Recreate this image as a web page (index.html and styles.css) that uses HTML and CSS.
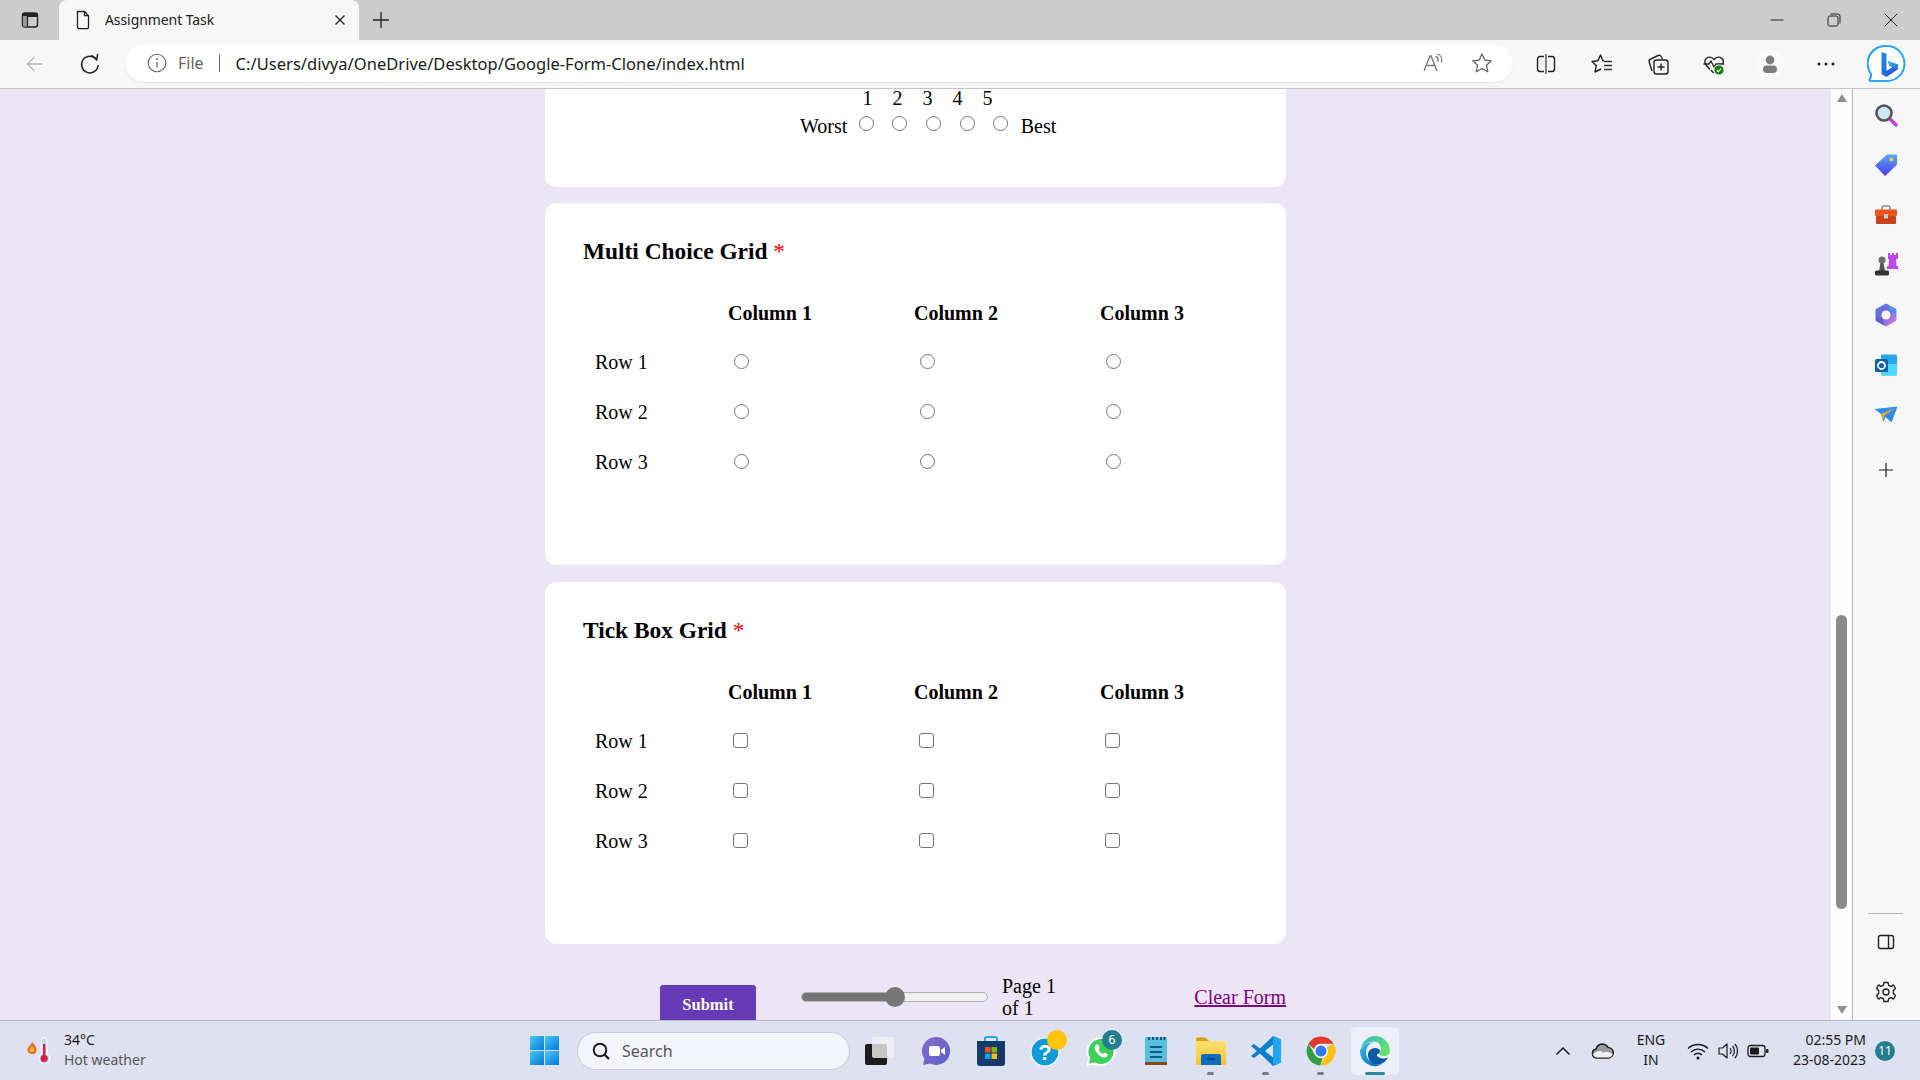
FILE: index.html
```html
<!DOCTYPE html>
<html lang="en">
<head>
<meta charset="utf-8">
<title>Assignment Task</title>
<link rel="stylesheet" href="styles.css">
</head>
<body>
<svg class="defs" width="0" height="0">
  <defs>
    <linearGradient id="gBing" x1="0" y1="0" x2="1" y2="1"><stop offset="0" stop-color="#1b8be8"/><stop offset="1" stop-color="#2f4fd8"/></linearGradient>
    <linearGradient id="gBing2" x1="0" y1="0" x2="1" y2="1"><stop offset="0" stop-color="#39c7ef"/><stop offset="1" stop-color="#1f6fe0"/></linearGradient>
    <linearGradient id="gTag" x1="0" y1="0" x2="0" y2="1"><stop offset="0" stop-color="#58a6f5"/><stop offset="1" stop-color="#4a3df0"/></linearGradient>
    <linearGradient id="gM365" x1="0" y1="0" x2="1" y2="1"><stop offset="0" stop-color="#3f7fe0"/><stop offset="0.5" stop-color="#8a62d8"/><stop offset="1" stop-color="#c590e6"/></linearGradient>
    <linearGradient id="gWin" x1="0" y1="0" x2="1" y2="1"><stop offset="0" stop-color="#4fc8fb"/><stop offset="1" stop-color="#0078d4"/></linearGradient>
    <linearGradient id="gEdge" x1="0" y1="0" x2="1" y2="1"><stop offset="0" stop-color="#35c1f1"/><stop offset="1" stop-color="#0c59a4"/></linearGradient>
    <linearGradient id="gEdge2" x1="0" y1="0" x2="1" y2="0.5"><stop offset="0" stop-color="#2cb8d8"/><stop offset="1" stop-color="#66e36a"/></linearGradient>
    <linearGradient id="gMsg" x1="0" y1="0" x2="1" y2="1"><stop offset="0" stop-color="#8b6cc9"/><stop offset="1" stop-color="#5560cf"/></linearGradient>
    <linearGradient id="gFolder" x1="0" y1="0" x2="0" y2="1"><stop offset="0" stop-color="#ffdf70"/><stop offset="1" stop-color="#fbc02d"/></linearGradient>
  </defs>
</svg>

<div class="app">
  <header class="tabstrip">
    <div class="tab-toggle">
      <svg class="ic20" viewBox="0 0 20 20"><rect x="2.5" y="3" width="15" height="14" rx="2.5" fill="none" stroke="#222" stroke-width="1.4"/><rect x="2.5" y="3" width="15" height="4" rx="1.5" fill="#222"/><rect x="3" y="6" width="4.5" height="10.5" fill="#999"/><path d="M7.5 6v11" stroke="#222" stroke-width="1.2"/></svg>
    </div>
    <div class="tab">
      <svg class="ic20" viewBox="0 0 20 20"><path d="M4.5 1.500h7l4 4.200v11.300a1.700 1.700 0 0 1-1.700 1.700H6.200a1.700 1.700 0 0 1-1.700-1.700z" fill="none" stroke="#222" stroke-width="1.300"/><path d="M11.500 1.500v4.200h4" fill="none" stroke="#222" stroke-width="1.300"/></svg>
      <span class="tab-title">Assignment Task</span>
      <svg class="ic12 tab-close" viewBox="0 0 12 12"><path d="M1.5 1.5l9 9M10.5 1.5l-9 9" stroke="#222" stroke-width="1.4"/></svg>
    </div>
    <svg class="ic20 tab-plus" viewBox="0 0 20 20"><path d="M10 2v16M2 10h16" stroke="#222" stroke-width="1.3"/></svg>
    <div class="window-controls">
      <div class="win-btn"><svg class="ic14" viewBox="0 0 14 14"><path d="M0.5 7h13" stroke="#222" stroke-width="1"/></svg></div>
      <div class="win-btn"><svg class="ic14" viewBox="0 0 14 14"><rect x="1" y="3" width="10" height="10" rx="1.8" fill="none" stroke="#222" stroke-width="1"/><path d="M3.5 1h7.3A2.2 2.2 0 0 1 13 3.2v7.3" fill="none" stroke="#222" stroke-width="1"/></svg></div>
      <div class="win-btn"><svg class="ic14" viewBox="0 0 14 14"><path d="M0.8 0.8l12.4 12.4M13.2 0.8L0.8 13.2" stroke="#222" stroke-width="1"/></svg></div>
    </div>
  </header>

  <nav class="toolbar">
    <div class="tool"><svg class="ic20" viewBox="0 0 20 20"><path d="M18 10H2.5M9.5 3l-7 7 7 7" fill="none" stroke="#b9b9b9" stroke-width="1.4"/></svg></div>
    <div class="tool"><svg class="ic24" viewBox="0 0 24 24"><path d="M18.5 7.5A8.3 8.3 0 1 0 20.2 13" fill="none" stroke="#222" stroke-width="1.5"/><path d="M13.7 3.2l5 4.6 1-6" fill="none" stroke="#222" stroke-width="1.5"/></svg></div>
    <div class="address">
      <svg class="ic20" viewBox="0 0 20 20"><circle cx="10" cy="10" r="8.800" fill="none" stroke="#666" stroke-width="1.100"/><path d="M10 8.800v6" stroke="#666" stroke-width="1.200"/><circle cx="10" cy="6" r="1" fill="#666"/></svg>
      <span class="addr-file">File</span>
      <span class="addr-sep"></span>
      <span class="addr-url">C:/Users/divya/OneDrive/Desktop/Google-Form-Clone/index.html</span>
      <svg class="ic24 addr-read" viewBox="0 0 24 24"><path d="M3 20l6-15h1l6 15M5.500 14.500h8.500" fill="none" stroke="#777" stroke-width="1.300"/><path d="M14.500 5.500c2 .5 3 2.200 2.500 5M16.500 3c3.500 1 5 4.500 4 8.500" fill="none" stroke="#777" stroke-width="1.300"/></svg>
      <svg class="ic24 addr-star" viewBox="0 0 24 24"><path d="M12 3l2.800 6 6.500.8-4.800 4.500 1.300 6.500-5.800-3.200-5.800 3.200 1.300-6.500-4.800-4.500 6.500-.8z" fill="none" stroke="#666" stroke-width="1.3" stroke-linejoin="round"/></svg>
    </div>
    <div class="tools-right">
      <div class="tool-r"><svg class="ic24" viewBox="0 0 24 24"><path d="M10 4.500H6A2.500 2.500 0 0 0 3.500 7v10A2.500 2.500 0 0 0 6 19.500h4M14 4.500h4A2.500 2.500 0 0 1 20.500 7v10a2.500 2.500 0 0 1-2.500 2.500h-4" fill="none" stroke="#222" stroke-width="1.4"/><path d="M12 2v20" stroke="#666" stroke-width="1.6"/></svg></div>
      <div class="tool-r"><svg class="ic24" viewBox="0 0 24 24"><path d="M14 8.800L12.800 8.500 10.500 3 8 8.800l-6 .7 4.300 4.200L5 20l6-3" fill="none" stroke="#222" stroke-width="1.400" stroke-linejoin="round"/><path d="M14 9.500h8M14 13.500h8M14 17.500h8" stroke="#333" stroke-width="1.300"/></svg></div>
      <div class="tool-r"><svg class="ic24" viewBox="0 0 24 24"><rect x="8" y="8" width="14" height="14" rx="2.500" fill="none" stroke="#222" stroke-width="1.4"/><path d="M15 11.500v7M11.500 15h7" stroke="#222" stroke-width="1.4"/><path d="M6 19l-2.800-9A2.500 2.500 0 0 1 5 7l7-3.500a2.500 2.500 0 0 1 3.300 1.200L16.500 7" fill="none" stroke="#222" stroke-width="1.4"/></svg></div>
      <div class="tool-r"><svg class="ic24" viewBox="0 0 24 24"><path d="M8 17.500L4 13c-4-5 3-11 8-5.500C17 2 24 8 20.500 12" fill="none" stroke="#222" stroke-width="1.4"/><path d="M1.500 12H7l2-3 3 6 2-3h8" fill="none" stroke="#222" stroke-width="1.300"/><path d="M9 18l2.500 3" stroke="#222" stroke-width="1.300"/><circle cx="17" cy="18" r="5" fill="#107c10" stroke="#f7f7f7" stroke-width="0.800"/><path d="M14.800 18l1.600 1.600 2.800-3" fill="none" stroke="#fff" stroke-width="1.200"/></svg></div>
      <div class="tool-r"><div class="profile"><svg class="ic20" viewBox="0 0 20 20"><circle cx="10" cy="6" r="4.400" fill="#7d7d7d"/><rect x="3" y="11.500" width="14" height="7.500" rx="3.700" fill="#7d7d7d"/></svg></div></div>
      <div class="tool-r"><svg class="ic20" viewBox="0 0 20 20"><circle cx="3" cy="10" r="1.500" fill="#222"/><circle cx="10" cy="10" r="1.500" fill="#222"/><circle cx="17" cy="10" r="1.500" fill="#222"/></svg></div>
      <div class="tool-bing"><svg class="ic40" viewBox="0 0 40 40"><path d="M20 2a17.500 17.500 0 0 1 0 35H4c-1.200 0-1.800-.8-1.200-1.800 1.300-2 1.500-3.500 1-5.700A17.500 17.500 0 0 1 20 2z" fill="#fff" stroke="#2aa4ee" stroke-width="2"/><path d="M14.500 8l5 1.700v17l6-3.500-3-1.400-1.800-4.700 10 3.500v5L19.500 33l-5-2.800z" fill="url(#gBing)"/><path d="M20.700 17.100l10 3.500v5l-7-3.400z" fill="url(#gBing2)"/></svg></div>
    </div>
  </nav>

  <div class="workspace">
    <main class="page">
      <div class="form">
        <section class="card card-rating">
          <div class="scale-nums"><span>1</span><span>2</span><span>3</span><span>4</span><span>5</span></div>
          <div class="scale-row">
            <span class="scale-worst">Worst</span>
            <input class="radio scale-radio" type="radio" name="r0">
            <input class="radio scale-radio" type="radio" name="r0">
            <input class="radio scale-radio" type="radio" name="r0">
            <input class="radio scale-radio" type="radio" name="r0">
            <input class="radio scale-radio" type="radio" name="r0">
            <span class="scale-best">Best</span>
          </div>
        </section>

        <section class="card card-grid">
          <h3 class="q-title">Multi Choice Grid <span class="req">*</span></h3>
          <div class="grid">
            <span></span><b>Column 1</b><b>Column 2</b><b>Column 3</b>
            <span class="row-label">Row 1</span><span><input class="radio" type="radio" name="a1"></span><span><input class="radio" type="radio" name="a1"></span><span><input class="radio" type="radio" name="a1"></span>
            <span class="row-label">Row 2</span><span><input class="radio" type="radio" name="a2"></span><span><input class="radio" type="radio" name="a2"></span><span><input class="radio" type="radio" name="a2"></span>
            <span class="row-label">Row 3</span><span><input class="radio" type="radio" name="a3"></span><span><input class="radio" type="radio" name="a3"></span><span><input class="radio" type="radio" name="a3"></span>
          </div>
        </section>

        <section class="card card-grid">
          <h3 class="q-title">Tick Box Grid <span class="req">*</span></h3>
          <div class="grid">
            <span></span><b>Column 1</b><b>Column 2</b><b>Column 3</b>
            <span class="row-label">Row 1</span><span><input class="check" type="checkbox"></span><span><input class="check" type="checkbox"></span><span><input class="check" type="checkbox"></span>
            <span class="row-label">Row 2</span><span><input class="check" type="checkbox"></span><span><input class="check" type="checkbox"></span><span><input class="check" type="checkbox"></span>
            <span class="row-label">Row 3</span><span><input class="check" type="checkbox"></span><span><input class="check" type="checkbox"></span><span><input class="check" type="checkbox"></span>
          </div>
        </section>

        <div class="form-foot">
          <button class="submit" type="button">Submit</button>
          <input class="progress" type="range" min="0" max="100" value="50">
          <span class="page-count">Page 1 of 1</span>
          <a class="clear" href="#">Clear Form</a>
        </div>
      </div>
    </main>

    <div class="scrollbar">
      <span class="arrow-up"></span>
      <span class="thumb"></span>
      <span class="arrow-down"></span>
    </div>

    <aside class="sidebar">
      <div class="side-btn"><svg class="ic24" viewBox="0 0 24 24"><path d="M15 15l7 7" stroke="#c53fdc" stroke-width="3.500" stroke-linecap="round"/><circle cx="10" cy="10" r="7.500" fill="#cfe6f5" stroke="#555" stroke-width="2.600"/></svg></div>
      <div class="side-btn"><svg class="ic24" viewBox="0 0 24 24"><path d="M1.500 12.500L13 2h9.500v9.500L11 22.500z" fill="url(#gTag)" stroke="url(#gTag)" stroke-width="1" stroke-linejoin="round"/><circle cx="17.500" cy="6.500" r="2" fill="#f4cf3a"/></svg></div>
      <div class="side-btn"><svg class="ic24" viewBox="0 0 24 24"><path d="M8 7V4.500A1.500 1.500 0 0 1 9.500 3h5A1.500 1.500 0 0 1 16 4.500V7" fill="none" stroke="#8a8a8a" stroke-width="1.600"/><rect x="1" y="6.500" width="22" height="6.500" rx="1" fill="#e9541d"/><rect x="2" y="13" width="20" height="8" rx="1" fill="#c9431a"/><rect x="10" y="11" width="4" height="4.500" fill="#ccc"/></svg></div>
      <div class="side-btn"><svg class="ic24" viewBox="0 0 24 24"><circle cx="8" cy="7" r="3.500" fill="#6d6d6d"/><path d="M6.500 10h3l1.500 8H5z" fill="#555"/><rect x="1" y="17.500" width="14" height="5" rx="1.500" fill="#333"/><path d="M14 0h2v2h2V0h2v2h2V0h2v6h-2l.5 7H24v3H13v-3h1.500L15 6h-1z" fill="#bd49ec"/></svg></div>
      <div class="side-btn"><svg class="ic24" viewBox="0 0 24 24"><path d="M12 1l10 5.500v11L12 23 2 17.500v-11z" fill="url(#gM365)" stroke="url(#gM365)" stroke-width="1" stroke-linejoin="round"/><path d="M14 1.800L22 6.500v5.500l-5-2.500C15.500 8 14 7 14 5z" fill="#4a93e8"/><path d="M2 13l5 3c2 1.500 3 2 3 4.500v2L2 17.500z" fill="#5a5fd6"/><path d="M7.500 12a4.500 4.500 0 0 1 9 0 4.500 4.500 0 0 1-9 0z" fill="#f7f7f7"/></svg></div>
      <div class="side-btn"><svg class="ic24" viewBox="0 0 24 24"><rect x="7" y="1.500" width="16" height="21" rx="1.500" fill="#28a8ea"/><path d="M7 11l16 0v10a1.500 1.500 0 0 1-1.500 1.500H8.500A1.500 1.500 0 0 1 7 21z" fill="#50d9ff"/><rect x="1" y="6" width="13" height="13" rx="1.500" fill="#0a62b5"/><circle cx="7.500" cy="12.500" r="3.500" fill="none" stroke="#fff" stroke-width="1.800"/></svg></div>
      <div class="side-btn"><svg class="ic24" viewBox="0 0 24 24"><path d="M0.500 6l23-2.500-6 16-6-5.500-2 5-2.500-8z" fill="#2d8df0"/><path d="M7 11l14-6-11 8-1 6z" fill="#f2a81e"/></svg></div>
      <div class="side-btn side-plus"><svg class="ic16" viewBox="0 0 16 16"><path d="M8 1v14M1 8h14" stroke="#222" stroke-width="1.200"/></svg></div>
      <div class="side-fill"></div>
      <div class="side-rule"></div>
      <div class="side-btn"><svg class="ic20" viewBox="0 0 20 20"><rect x="2.500" y="3.500" width="15" height="13" rx="2" fill="none" stroke="#222" stroke-width="1.400"/><path d="M12.500 3.500v13" stroke="#222" stroke-width="1.400"/></svg></div>
      <div class="side-btn"><svg class="ic24" viewBox="0 0 24 24"><path d="M10 2.500h4l.7 2.800 2.200 1 2.600-1.300 2 3.500-2.100 2 0 3 2.100 2-2 3.500-2.600-1.300-2.200 1-.7 2.800h-4l-.7-2.800-2.200-1-2.600 1.300-2-3.500 2.100-2 0-3-2.100-2 2-3.500 2.600 1.300 2.200-1z" fill="none" stroke="#222" stroke-width="1.400" stroke-linejoin="round"/><circle cx="12" cy="12" r="3" fill="none" stroke="#222" stroke-width="1.400"/></svg></div>
    </aside>
  </div>

  <footer class="taskbar">
    <div class="weather">
      <svg class="weather-ic" viewBox="0 0 24 27"><path d="M5 5c3 3 5 5.500 4.500 8.500C9 16.500 6.500 17.500 4.500 17S0 15 .5 12C1 9.500 4 8 5 5z" fill="#ee6a2a"/><path d="M5 9.500c1.500 1.500 2.500 2.500 2.200 4.200C7 15.500 3 15.700 2.700 13.700 2.500 12 4.300 11 5 9.500z" fill="#fbc02d"/><path d="M14.500 3a2.800 2.800 0 0 1 5.500 0v14a5.500 5.500 0 1 1-5.500 0z" fill="#c3d8f4" stroke="#fff" stroke-width="1"/><circle cx="17.200" cy="21.500" r="3.600" fill="#d81e4a"/><rect x="16" y="7" width="2.400" height="13" fill="#d81e4a"/></svg>
      <div class="weather-txt"><div class="w-temp">34°C</div><div class="w-desc">Hot weather</div></div>
    </div>
    <svg class="win-logo" viewBox="0 0 29 29"><rect width="14" height="14" fill="url(#gWin)"/><rect x="15" width="14" height="14" fill="url(#gWin)"/><rect y="15" width="14" height="14" fill="url(#gWin)"/><rect x="15" y="15" width="14" height="14" fill="url(#gWin)"/></svg>
    <div class="search">
      <svg class="ic20" viewBox="0 0 20 20"><circle cx="9" cy="9" r="6.300" fill="none" stroke="#1a1a1a" stroke-width="1.900"/><path d="M13.500 13.500l4.500 4.500" stroke="#1a1a1a" stroke-width="2.200"/></svg>
      <span>Search</span>
    </div>
    <div class="apps">
      <div class="app-btn"><svg class="ic32" viewBox="0 0 32 32"><rect x="0" y="9" width="22" height="21" rx="2" fill="#1c1c1c"/><rect x="7" y="2" width="22" height="21" rx="2" fill="#f2f2f4" fill-opacity="0.8"/></svg></div>
      <div class="app-btn"><svg class="ic32" viewBox="0 0 32 32"><path d="M16 2a14 14 0 1 1-6 26.600L3 30l1.500-6A14 14 0 0 1 16 2z" fill="url(#gMsg)"/><rect x="9" y="11" width="11" height="10" rx="2" fill="#fff"/><path d="M21 15l4-3v8l-4-3z" fill="#fff"/></svg></div>
      <div class="app-btn"><svg class="ic32" viewBox="0 0 32 32"><path d="M10 6V3.500A1.500 1.500 0 0 1 11.500 2h9A1.500 1.500 0 0 1 22 3.500V6" fill="none" stroke="#2aa8e0" stroke-width="2"/><path d="M2 6h28v22a3 3 0 0 1-3 3H5a3 3 0 0 1-3-3z" fill="#143a6b"/><rect x="10" y="12" width="5.500" height="5.500" fill="#f25022"/><rect x="16.500" y="12" width="5.500" height="5.500" fill="#7fba00"/><rect x="10" y="18.500" width="5.500" height="5.500" fill="#00a4ef"/><rect x="16.500" y="18.500" width="5.500" height="5.500" fill="#ffb900"/></svg></div>
      <div class="app-btn app-notif">
        <svg class="ic32" viewBox="0 0 32 32"><circle cx="15" cy="17" r="14" fill="#129ad8" stroke="#fff" stroke-width="1.200"/><text class="help-q" x="15" y="25" text-anchor="middle">?</text></svg>
        <span class="dot-yellow"></span>
      </div>
      <div class="app-btn app-notif">
        <svg class="ic32" viewBox="0 0 32 32"><path d="M16 3a13.500 13.500 0 1 1-6.500 25.300L2.500 30l1.800-6.700A13.500 13.500 0 0 1 16 3z" fill="#3ecf5a" stroke="#fff" stroke-width="2"/><path d="M11.500 9.500c-2 1.200-2.500 3.500-.5 7 2 3.300 5 6 8.500 6 2 0 3.500-1.500 3.500-3l-3.500-2-1.500 1.500c-2-.7-3.500-2.500-4.500-4.500l1.300-1.500-1.700-3.700z" fill="#fff"/></svg>
        <span class="count-badge">6</span>
      </div>
      <div class="app-btn"><svg class="ic32" viewBox="0 0 32 32"><rect x="5" y="2" width="22" height="28" rx="1.500" fill="#57bfe0"/><rect x="5" y="27" width="22" height="3" fill="#8a4312"/><path d="M9 2v3M13 2v3M17 2v3M21 2v3M24.500 2v3" stroke="#134c66" stroke-width="1.800"/><path d="M10 12h12M10 17h12M10 22h12" stroke="#15587d" stroke-width="1.800"/></svg></div>
      <div class="app-btn app-running"><svg class="ic32" viewBox="0 0 32 32"><path d="M1 4a1.500 1.500 0 0 1 1.500-1.500h8L14 6h-13z" fill="#d99e0b"/><rect x="1" y="6" width="30" height="24" rx="1" fill="url(#gFolder)"/><path d="M6 21a2 2 0 0 1 2-2h16a2 2 0 0 1 2 2v9H6z" fill="#0f6cbd"/><path d="M12 24h8" stroke="#0a3d6e" stroke-width="1.500"/></svg></div>
      <div class="app-btn app-running"><svg class="ic32" viewBox="0 0 32 32"><path d="M23 1l8 3.500v23L23 31 10 18.500 4 23l-3-2 6-5-6-5 3-2 6 4.500z" fill="#0a7fcd"/><path d="M23 1l8 3.500v23L23 31z" fill="#22a5ed"/><path d="M23 9.500L15 16l8 6.500z" fill="#dde1f0"/></svg></div>
      <div class="app-btn app-running"><svg class="ic32" viewBox="0 0 32 32"><path d="M16 1.500a14.500 14.500 0 0 1 12.600 7.300H16a7.300 7.300 0 0 0-7 5.200L3.500 8.800A14.500 14.500 0 0 1 16 1.500z" fill="#e33b2e"/><path d="M28.600 8.800A14.500 14.500 0 0 1 15 30.500l6.300-11A7.300 7.300 0 0 0 22 12z" fill="#fbc116"/><path d="M15 30.500A14.500 14.500 0 0 1 3.500 8.800L9.800 19.500a7.300 7.300 0 0 0 8 3.500z" fill="#2f9e44"/><circle cx="16" cy="16" r="6.800" fill="#fff"/><circle cx="16" cy="16" r="5.500" fill="#2f7bef"/></svg></div>
      <div class="app-btn app-active"><svg class="ic32" viewBox="0 0 32 32"><path d="M16 1a15 15 0 0 1 15 15c0 3-2.500 5-6 5-3 0-5-1-5-2 0-1 2-2 2-5 0-4-3-7.500-7-7.500-6 0-10 3-13 7.500C3.500 6.500 9 1 16 1z" fill="url(#gEdge2)"/><path d="M2 14c3-5 8-7 12-6.500-4 1-7 5-7 10 0 6 5 12 13 12 1.500 0 3-.2 4-.8A15 15 0 0 1 1 16c0-.7 0-1.400 1-2z" fill="url(#gEdge)"/><path d="M9 20c0-4 3-7 7-7 3 0 5 1.500 5 3.500s-3 2-3 3.500c0 2 3.500 3.500 7 3.500 1.500 0 3-.5 4-1-2 4-6 7-11 7-5.500 0-9-4.500-9-9.500z" fill="#0c59a4"/></svg></div>
    </div>
    <svg class="ic20 tray-chev" viewBox="0 0 20 20"><path d="M3.500 13.500L10 7l6.500 6.500" fill="none" stroke="#1c1c1c" stroke-width="1.500"/></svg>
    <svg class="ic24 tray-cloud" viewBox="0 0 24 24"><path d="M6 19a4.500 4.500 0 0 1-1-8.900A6.500 6.500 0 0 1 17 8.500 5.300 5.300 0 0 1 18 19z" fill="#9b9b9b" stroke="#222" stroke-width="1.200"/><path d="M2 15c4-3 7-4 10-1.500 2-1 6-1 10 1.500v2a2 2 0 0 1-3 2H5a3 3 0 0 1-3-4z" fill="#f0f0f0"/><path d="M6 19a4.500 4.500 0 0 1-1-8.900A6.500 6.500 0 0 1 17 8.500 5.300 5.300 0 0 1 18 19z" fill="none" stroke="#222" stroke-width="1.200"/></svg>
    <div class="tray-lang"><div>ENG</div><div>IN</div></div>
    <svg class="tray-wifi" viewBox="0 0 22 18"><path d="M1 6.500a14.500 14.500 0 0 1 20 0M4 10a10 10 0 0 1 14 0M7 13a5.500 5.500 0 0 1 8 0" fill="none" stroke="#1c1c1c" stroke-width="1.400"/><circle cx="11" cy="16" r="1.500" fill="#1c1c1c"/></svg>
    <svg class="tray-vol" viewBox="0 0 20 18"><path d="M1 6h3.500L9 2v14l-4.500-4H1z" fill="none" stroke="#1c1c1c" stroke-width="1.200" stroke-linejoin="round"/><path d="M12 6c1.500 2 1.500 4 0 6M14.500 3.800c2.500 3 2.500 7.400 0 10.400M17 2c3.300 4 3.300 10 0 14" fill="none" stroke="#1c1c1c" stroke-width="1.200"/></svg>
    <svg class="tray-batt" viewBox="0 0 22 14"><rect x="1" y="1.500" width="17" height="11" rx="2.500" fill="none" stroke="#1c1c1c" stroke-width="1.300"/><rect x="3" y="3.500" width="9" height="7" rx="1" fill="#1c1c1c"/><rect x="19" y="5" width="2.500" height="4" rx="1" fill="#1c1c1c"/></svg>
    <div class="clock"><div>02:55 PM</div><div>23-08-2023</div></div>
    <span class="clock-badge">11</span>
  </footer>
</div>
</body>
</html>
```

FILE: styles.css
```css
* { box-sizing: border-box; }
html, body { margin: 0; height: 100%; overflow: hidden; }
body { font-family: "Liberation Serif", "Times New Roman", serif; font-size: 20px; color: #000; }
svg { display: block; flex: none; }
.defs { position: absolute; }
.ic12 { width: 12px; height: 12px; }
.ic14 { width: 14px; height: 14px; }
.ic16 { width: 16px; height: 16px; }
.ic18 { width: 18px; height: 18px; }
.ic20 { width: 20px; height: 20px; }
.ic24 { width: 24px; height: 24px; }
.ic32 { width: 32px; height: 32px; }
.ic40 { width: 40px; height: 40px; }

.app { width: 1920px; height: 1080px; display: flex; flex-direction: column; }

/* title strip */
.tabstrip { height: 40px; flex: none; background: #cccccc; display: flex; align-items: center; font-family: "Noto Sans", sans-serif; }
.tab-toggle { width: 59px; padding-left: 20px; }
.tab { width: 300px; height: 40px; align-self: flex-end; background: #f7f7f7; border-radius: 8px 8px 0 0; display: flex; align-items: center; padding-left: 14px; }
.tab-title { margin: -2px 0 0 12px; font-size: 14px; color: #222; letter-spacing: -0.08px; }
.tab-close { margin-left: auto; margin-right: 13px; }
.tab-plus { margin-left: 12px; }
.window-controls { margin-left: auto; display: flex; padding-right: 0; }
.win-btn { width: 57px; height: 40px; display: flex; align-items: center; justify-content: center; }
.win-btn:last-child { width: 58px; }

/* toolbar */
.toolbar { height: 49px; flex: none; background: #f7f7f7; border-bottom: 1px solid #c6c6c6; display: flex; align-items: center; padding-left: 7px; font-family: "Noto Sans", sans-serif; }
.tool { width: 55px; display: flex; justify-content: center; }
.address { width: 1388px; height: 38px; margin-left: 8px; margin-top: -2px; background: #fff; border-radius: 19px; box-shadow: 0 1px 2px rgba(0,0,0,0.08); display: flex; align-items: center; padding-left: 22px; }
.addr-file { margin-left: 11px; font-size: 16px; color: #666; }
.addr-sep { width: 1px; height: 18px; margin-left: 15px; background: #666; }
.addr-url { margin-left: 16px; font-size: 16.500px; color: #1a1a1a; letter-spacing: 0.03px; white-space: nowrap; }
.addr-read { margin-left: auto; }
.addr-star { margin-left: 25px; margin-right: 19px; }
.tools-right { display: flex; align-items: center; margin-left: 5px; }
.tool-r { width: 56px; display: flex; justify-content: center; }
.profile { width: 28px; height: 28px; border-radius: 50%; background: #fbfbfb; display: flex; align-items: center; justify-content: center; }
.tool-bing { width: 65px; display: flex; justify-content: center; }

/* content */
.workspace { flex: 1; min-height: 0; display: flex; }
.page { width: 1831px; background: #ece5f6; overflow: hidden; }
.form { width: 741px; margin: 0 auto; }
.card { background: #fff; border-radius: 12px; margin-bottom: 17px; }
.card-rating { height: 98px; margin-bottom: 16px; border-radius: 0 0 12px 12px; padding-left: 255px; }
.scale-nums { display: flex; margin-left: 52.500px; line-height: 18px; }
.scale-nums span { width: 30px; text-align: center; }
.scale-row { display: flex; align-items: center; height: 23px; margin-top: 7.500px; }
.scale-worst { width: 58.500px; }
.radio { appearance: none; -webkit-appearance: none; width: 15px; height: 15px; border: 1.300px solid #767676; border-radius: 50%; background: #fff; margin: 0 0 0 5px; display: block; }
.check { appearance: none; -webkit-appearance: none; width: 15px; height: 15px; border: 1.300px solid #767676; border-radius: 3px; background: #fff; margin: 0 0 0 4px; display: block; }
.scale-radio { margin: -5px 18.700px 0 0; }
.scale-best { margin-left: -6.200px; }

.card-grid { padding: 35px 0 77px 38px; }
.q-title { margin: 0 0 24px; font-size: 23.400px; line-height: 27px; font-weight: bold; }
.req { color: #ff0000; font-weight: normal; }
.grid { display: grid; grid-template-columns: 145px 186px 186px 186px; grid-auto-rows: 50px; align-items: center; margin-bottom: -1px; }
.grid b { font-weight: bold; padding-bottom: 2px; }
.grid input { margin-top: -5px; margin-left: 6px; }
.grid .check { margin-left: 5px; }
.row-label { padding-left: 12px; padding-bottom: 3px; }

.form-foot { display: flex; align-items: flex-start; margin-top: 31px; height: 60px; }
.submit { width: 96px; height: 40px; margin: 10px 0 0 115px; padding: 0; border: 0; border-radius: 3px; background: #673ab7; color: #fff; font: bold 16.500px "Liberation Serif", serif; }
.progress { -webkit-appearance: none; appearance: none; width: 187px; height: 20px; margin: 12px 0 0 45px; padding: 0; background: transparent; }
.progress::-webkit-slider-runnable-track { height: 10px; border-radius: 5px; border: 1px solid #b2b2b2; background: linear-gradient(to right, #767676 50%, #efefef 50%); }
.progress::-webkit-slider-thumb { -webkit-appearance: none; width: 20px; height: 20px; margin-top: -6px; border-radius: 50%; background: #767676; }
.page-count { width: 62px; margin-left: 14px; line-height: 22px; }
.clear { margin: 11px 0 0 auto; line-height: 23px; color: #800080; }

/* scrollbar */
.scrollbar { width: 21px; background: #fdfdfd; display: flex; flex-direction: column; align-items: center; }
.arrow-up { width: 0; height: 0; margin-top: 5px; border-left: 5.500px solid transparent; border-right: 5.500px solid transparent; border-bottom: 8px solid #8f8f8f; }
.thumb { width: 11px; height: 294px; margin-top: 513px; border-radius: 6px; background: #8a8a8a; }
.arrow-down { width: 0; height: 0; margin-top: auto; margin-bottom: 6px; border-left: 5.500px solid transparent; border-right: 5.500px solid transparent; border-top: 8px solid #8f8f8f; }

/* side bar */
.sidebar { width: 68px; background: #f7f7f7; border-left: 1px solid #b5b5b5; display: flex; flex-direction: column; align-items: center; padding: 1px 2px 3px 0; }
.side-btn { height: 50px; display: flex; align-items: center; justify-content: center; flex: none; }
.side-plus { margin-top: 5px; }
.side-fill { flex: 1; }
.side-rule { width: 35px; height: 1px; background: #b5b5b5; margin-bottom: 3px; }

/* task bar */
.taskbar { height: 60px; flex: none; background: #dde1f0; border-top: 1px solid #b8bacb; display: flex; align-items: center; font-family: "Noto Sans", sans-serif; color: #1c1c1c; }
.weather { width: 530px; display: flex; align-items: center; padding-left: 27px; }
.weather-ic { width: 24px; height: 27px; }
.weather-txt { margin: -2px 0 0 13px; font-size: 14px; line-height: 20px; }
.w-temp { color: #1c1c1c; }
.w-desc { color: #555; }
.win-logo { width: 29px; height: 29px; }
.search { width: 273px; height: 38px; margin-left: 18px; border-radius: 19px; background: #f4f5fb; border: 1px solid #c9cbdc; display: flex; align-items: center; padding-left: 13px; font-size: 16px; color: #555; }
.search span { margin-left: 11px; }
.apps { display: flex; margin-left: 3px; height: 48px; }
.app-btn { width: 55px; height: 48px; position: relative; display: flex; align-items: center; justify-content: center; }
.app-active { width: 48px; margin-left: 3px; border-radius: 5px; background: #edf0f9; }
.app-running::after, .app-active::after { content: ""; position: absolute; left: 50%; bottom: 0; height: 3px; width: 7px; margin-left: -3.500px; border-radius: 2px; background: #7b7d85; }
.app-active::after { width: 20px; margin-left: -10px; background: #2b8a98; }
.help-q { font: bold 22px "Liberation Sans", sans-serif; fill: #fff; }
.dot-yellow { position: absolute; right: 6px; top: 3px; width: 20px; height: 20px; border-radius: 50%; background: #fcc30f; }
.count-badge { position: absolute; right: 6px; top: 3px; width: 20px; height: 20px; border-radius: 50%; background: #237e8e; color: #fff; font-size: 12px; line-height: 20px; text-align: center; }
.tray-chev { margin-left: 154px; }
.tray-cloud { margin-left: 18px; }
.tray-lang { width: 36px; margin: -2px 0 0 18px; text-align: center; font-size: 14px; line-height: 20px; }
.tray-wifi { width: 22px; height: 18px; margin-left: 18px; }
.tray-vol { width: 20px; height: 18px; margin-left: 9px; }
.tray-batt { width: 22px; height: 14px; margin-left: 9px; }
.clock { margin: -2px 0 0 auto; text-align: right; font-size: 14px; line-height: 20px; }
.clock-badge { width: 20px; height: 20px; margin-left: 9px; margin-right: 25px; border-radius: 50%; background: #237e8e; color: #fff; font-size: 12px; line-height: 20px; text-align: center; }
```
